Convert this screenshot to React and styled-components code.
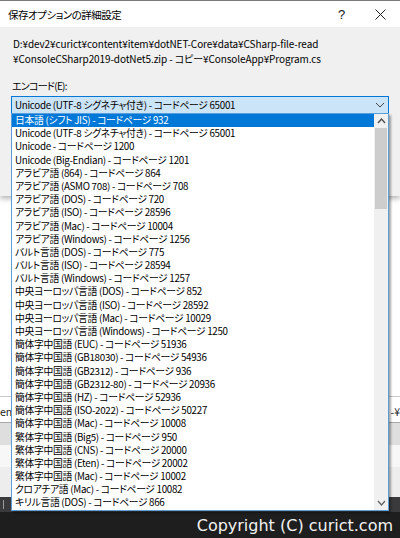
import React from "react";
import styled, { createGlobalStyle } from "styled-components";

const GlobalStyle = createGlobalStyle`
  html, body {
    margin: 0;
    padding: 0;
  }
  body {
    width: 400px;
    height: 538px;
    overflow: hidden;
    background: #1e1e1e;
    font-family: "Noto Sans CJK JP", "Noto Sans", sans-serif;
  }
`;

const Page = styled.div`
  position: relative;
  display: flex;
  flex-direction: column;
  width: 400px;
  height: 538px;
  overflow: hidden;
`;

const Dialog = styled.div`
  position: relative;
  z-index: 2;
  height: 196px;
  display: flex;
  flex-direction: column;
  background: #f0f0f0;
  box-shadow: 0 2px 6px rgba(0, 0, 0, 0.35);
`;

const TitleBar = styled.div`
  height: 26px;
  display: flex;
  align-items: center;
  background: #fff;
  border-top: 1px solid #7a7a7a;
  padding-left: 8px;
`;

const Title = styled.div`
  flex: 1;
  font-size: 10.5px;
  letter-spacing: -0.5px;
  font-feature-settings: "palt";
  color: #000;
`;

const CaptionButton = styled.div`
  width: 39px;
  height: 26px;
  display: flex;
  align-items: center;
  justify-content: center;
  font-family: "Liberation Sans", sans-serif;
  font-size: 13px;
  color: #111;
`;

const Body = styled.div`
  flex: 1;
  padding: 9px 11px 0 11px;
`;

const PathText = styled.div`
  font-size: 10px;
  line-height: 15px;
  letter-spacing: -0.1px;
  font-feature-settings: "palt";
  color: #000;
  padding-left: 2px;
`;

const Label = styled.div`
  margin-top: 12px;
  font-size: 10px;
  line-height: 15px;
  letter-spacing: -0.7px;
  font-feature-settings: "palt";
  padding-left: 1px;
`;

const Combo = styled.div`
  position: relative;
  margin-top: 3px;
  height: 16px;
  display: flex;
  align-items: center;
  background: #cce4f7;
  border: 1px solid #0078d7;
  padding-left: 3px;
  font-size: 9.8px;
  letter-spacing: -0.3px;
  font-feature-settings: "palt";
`;

const ComboText = styled.div`
  flex: 1;
  white-space: nowrap;
`;

const ComboArrow = styled.div`
  width: 17px;
  display: flex;
  align-items: center;
  justify-content: center;
`;

const ListBox = styled.div`
  position: absolute;
  top: 100%;
  left: -1px;
  right: -1px;
  display: flex;
  background: #fff;
  border: 1px solid #5a9fdc;
  box-shadow: 2px 2px 2px rgba(0, 0, 0, 0.35);
  letter-spacing: -0.3px;
`;

const Items = styled.div`
  flex: 1;
`;

const Item = styled.div`
  height: 13.2px;
  line-height: 13.2px;
  padding-left: 3px;
  font-size: 9.8px;
  font-feature-settings: "palt";
  white-space: nowrap;
  overflow: hidden;
  color: ${(p) => (p.$selected ? "#fff" : "#000")};
  background: ${(p) => (p.$selected ? "#0078d7" : "transparent")};
`;

const ScrollBar = styled.div`
  width: 14px;
  display: flex;
  flex-direction: column;
  background: #f0f0f0;
`;

const ScrollArrow = styled.div`
  height: 14px;
  display: flex;
  align-items: center;
  justify-content: center;
`;

const Track = styled.div`
  flex: 1;
  padding: 0 1px 0 1px;
`;

const Thumb = styled.div`
  height: ${(p) => p.$size}px;
  background: #cdcdcd;
`;

const Editor = styled.div`
  flex: 1;
  display: flex;
  flex-direction: column;
  background: #fff;
`;

const EditorBlank = styled.div`
  flex: 1;
`;

const CodeRow = styled.div`
  height: 27px;
  display: flex;
  align-items: center;
  justify-content: space-between;
  border-top: 1px solid #c8c8c8;
  border-bottom: 1px solid #a8a8a8;
  font-size: 10.5px;
  color: #1e1e1e;
  padding-top: 4px;
  box-sizing: border-box;
`;

const Band = styled.div`
  height: ${(p) => p.$h}px;
  background: ${(p) => p.$bg};
`;

const StatusStrip = styled.div`
  height: 15px;
  display: flex;
  align-items: center;
  padding-left: 3px;
  background: #3a3a3c;
`;

const StripMark = styled.div`
  width: 1px;
  height: 9px;
  background: #9a9a9a;
`;

const Footer = styled.div`
  height: 26px;
  display: flex;
  align-items: center;
  justify-content: flex-end;
  padding-right: 7px;
  background: #1e1e1e;
  color: #f2f2f2;
  font-family: "DejaVu Sans", sans-serif;
  font-size: 16px;
`;

const Chevron = ({ up, w = 8, h = 4, color = "#444", sw = 1 }) => (
  <svg width={w + 2} height={h + 2} viewBox={`0 0 ${w + 2} ${h + 2}`}>
    <polyline
      points={
        up
          ? `1,${h + 1} ${w / 2 + 1},1 ${w + 1},${h + 1}`
          : `1,1 ${w / 2 + 1},${h + 1} ${w + 1},1`
      }
      fill="none"
      stroke={color}
      strokeWidth={sw}
    />
  </svg>
);

const CloseIcon = () => (
  <svg width="11" height="11" viewBox="0 0 11 11">
    <path d="M0.5 0.5 L10.5 10.5 M10.5 0.5 L0.5 10.5" stroke="#222" strokeWidth="1" />
  </svg>
);

const encodings = [
  "日本語 (シフト JIS) - コードページ 932",
  "Unicode (UTF-8 シグネチャ付き) - コードページ 65001",
  "Unicode - コードページ 1200",
  "Unicode (Big-Endian) - コードページ 1201",
  "アラビア語 (864) - コードページ 864",
  "アラビア語 (ASMO 708) - コードページ 708",
  "アラビア語 (DOS) - コードページ 720",
  "アラビア語 (ISO) - コードページ 28596",
  "アラビア語 (Mac) - コードページ 10004",
  "アラビア語 (Windows) - コードページ 1256",
  "バルト言語 (DOS) - コードページ 775",
  "バルト言語 (ISO) - コードページ 28594",
  "バルト言語 (Windows) - コードページ 1257",
  "中央ヨーロッパ言語 (DOS) - コードページ 852",
  "中央ヨーロッパ言語 (ISO) - コードページ 28592",
  "中央ヨーロッパ言語 (Mac) - コードページ 10029",
  "中央ヨーロッパ言語 (Windows) - コードページ 1250",
  "簡体字中国語 (EUC) - コードページ 51936",
  "簡体字中国語 (GB18030) - コードページ 54936",
  "簡体字中国語 (GB2312) - コードページ 936",
  "簡体字中国語 (GB2312-80) - コードページ 20936",
  "簡体字中国語 (HZ) - コードページ 52936",
  "簡体字中国語 (ISO-2022) - コードページ 50227",
  "簡体字中国語 (Mac) - コードページ 10008",
  "繁体字中国語 (Big5) - コードページ 950",
  "繁体字中国語 (CNS) - コードページ 20000",
  "繁体字中国語 (Eten) - コードページ 20002",
  "繁体字中国語 (Mac) - コードページ 10002",
  "クロアチア語 (Mac) - コードページ 10082",
  "キリル言語 (DOS) - コードページ 866",
];

export default function App() {
  return (
    <Page>
      <GlobalStyle />
      <Dialog>
        <TitleBar>
          <Title>保存オプションの詳細設定</Title>
          <CaptionButton>?</CaptionButton>
          <CaptionButton>
            <CloseIcon />
          </CaptionButton>
        </TitleBar>
        <Body>
          <PathText>
            D:¥dev2¥curict¥content¥item¥dotNET-Core¥data¥CSharp-file-read
            <br />
            ¥ConsoleCSharp2019-dotNet5.zip - コピー¥ConsoleApp¥Program.cs
          </PathText>
          <Label>エンコード(E):</Label>
          <Combo>
            <ComboText>Unicode (UTF-8 シグネチャ付き) - コードページ 65001</ComboText>
            <ComboArrow>
              <Chevron />
            </ComboArrow>
            <ListBox>
              <Items>
                {encodings.map((e, i) => (
                  <Item key={i} $selected={i === 0}>
                    {e}
                  </Item>
                ))}
              </Items>
              <ScrollBar>
                <ScrollArrow>
                  <Chevron up w={7} h={4} color="#505050" sw={1.4} />
                </ScrollArrow>
                <Track>
                  <Thumb $size={81} />
                </Track>
                <ScrollArrow>
                  <Chevron w={7} h={4} color="#606060" sw={1.2} />
                </ScrollArrow>
              </ScrollBar>
            </ListBox>
          </Combo>
        </Body>
      </Dialog>
      <Editor>
        <EditorBlank />
        <CodeRow>
          <span>en</span>
          <span>-¥</span>
        </CodeRow>
        <Band $h={22} $bg="#dedede" />
        <Band $h={22} $bg="#f7f7f7" />
        <Band $h={30} $bg="#ededed" />
      </Editor>
      <StatusStrip>
        <StripMark />
      </StatusStrip>
      <Footer>Copyright (C) curict.com</Footer>
    </Page>
  );
}
